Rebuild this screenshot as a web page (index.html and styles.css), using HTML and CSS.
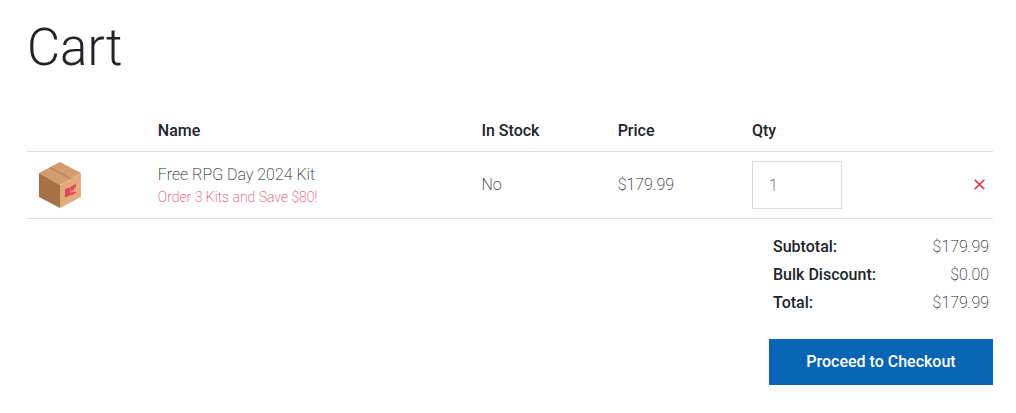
FILE: index.html
```html
<!DOCTYPE html>
<html lang="en">
<head>
<meta charset="utf-8">
<meta name="viewport" content="width=device-width, initial-scale=1">
<title>Cart</title>
<link rel="stylesheet" href="styles.css">
</head>
<body>
<main class="cart">
  <h1 class="cart-title">Cart</h1>
  <table class="items">
    <thead>
      <tr>
        <th class="col-image"></th>
        <th class="col-name" scope="col">Name</th>
        <th class="col-stock" scope="col">In Stock</th>
        <th class="col-price" scope="col">Price</th>
        <th class="col-qty" scope="col" id="qty-label">Qty</th>
        <th class="col-remove"></th>
      </tr>
    </thead>
    <tbody>
      <tr>
        <td>
          <svg class="box" viewBox="0 0 42 46" role="img" aria-label="Cardboard box">
            <path fill="#d39c6f" d="M21 0 42 11 21 23 0 11Z"/>
            <path fill="#a57247" d="M0 11 21 23V46L0 35Z"/>
            <path fill="#e4ab7b" d="M42 11 21 23V46L42 35Z"/>
            <path fill="none" stroke="#b17d53" d="M11 5.500 32 17"/>
            <path fill="#e5405a" d="M26 27 31.500 25V33L26 35.500ZM32 24.500 37 22V25L35 26.500V28L32 29ZM32 30.500 34.500 29.500V31L37 29V31L32 33.500Z"/>
            <path fill="none" stroke="#d9605f" stroke-width=".5" d="M26 30 31 28M28.500 27V35M34 24V26"/>
          </svg>
        </td>
        <td>
          <div class="product">Free RPG Day 2024 Kit</div>
          <div class="promo">Order 3 Kits and Save $80!</div>
        </td>
        <td>No</td>
        <td>$179.99</td>
        <td><input class="qty" type="text" inputmode="numeric" value="1" aria-labelledby="qty-label"></td>
        <td class="remove-cell">
          <button class="remove" type="button" aria-label="Remove item">
            <svg class="remove-icon" viewBox="0 0 10 10" aria-hidden="true"><path d="M.7.7 9.300 9.300M9.300.7.7 9.300"/></svg>
          </button>
        </td>
      </tr>
    </tbody>
  </table>
  <section class="summary">
    <dl class="totals">
      <div class="total-row"><dt>Subtotal:</dt><dd>$179.99</dd></div>
      <div class="total-row"><dt>Bulk Discount:</dt><dd>$0.00</dd></div>
      <div class="total-row"><dt>Total:</dt><dd>$179.99</dd></div>
    </dl>
    <button class="checkout" type="button">Proceed to Checkout</button>
  </section>
</main>
</body>
</html>
```
FILE: styles.css
```css
* {
  box-sizing: border-box;
}

body {
  margin: 0;
  background: #fff;
  color: #212529;
  font-family: Roboto, sans-serif;
  font-size: 16px;
  font-weight: 200;
  line-height: 24px;
}

.cart {
  padding: 17px 23px 28px 27px;
}

.cart-title {
  margin: 0 0 32px;
  font-size: 51px;
  font-weight: 300;
  line-height: 62px;
}

.items {
  width: 100%;
  border-collapse: collapse;
  table-layout: fixed;
}

.items th,
.items td {
  padding: 8px 12px;
  border-bottom: 1px solid #dcdfe1;
  text-align: left;
  vertical-align: middle;
}

.items td {
  padding: 9px 12px;
}

.items th {
  font-weight: 500;
}

.col-image {
  width: 12.3%;
}

.col-name {
  width: 33.5%;
}

.col-stock {
  width: 14.1%;
}

.col-price {
  width: 13.9%;
}

.box {
  display: block;
  width: 42px;
  height: 46px;
}

.promo {
  color: #e5405a;
  font-size: 14px;
  line-height: 20px;
}

.qty {
  display: block;
  width: 90px;
  height: 48px;
  padding: 0 16px;
  border: 1px solid #d7dbdf;
  border-radius: 0;
  background: #fff;
  color: #495057;
  font: inherit;
}

.items .remove-cell {
  padding: 8px;
  text-align: right;
}

.remove {
  padding: 0;
  border: 0;
  background: none;
  cursor: pointer;
}

.remove-icon {
  display: block;
  width: 11px;
  height: 11px;
  fill: none;
  stroke: #e5405a;
  stroke-width: 1.6;
}

.summary {
  width: 224px;
  margin: 16px 0 0 auto;
}

.totals {
  display: grid;
  gap: 4px;
  margin: 0 0 24px;
  padding: 0 4px;
}

.total-row {
  display: flex;
  justify-content: space-between;
}

.total-row dt {
  font-weight: 500;
}

.total-row dd {
  margin: 0;
}

.checkout {
  display: block;
  width: 100%;
  padding: 11px 16px;
  border: 0;
  background: #0865b5;
  color: #fff;
  font: inherit;
  font-weight: 500;
  cursor: pointer;
}
```
